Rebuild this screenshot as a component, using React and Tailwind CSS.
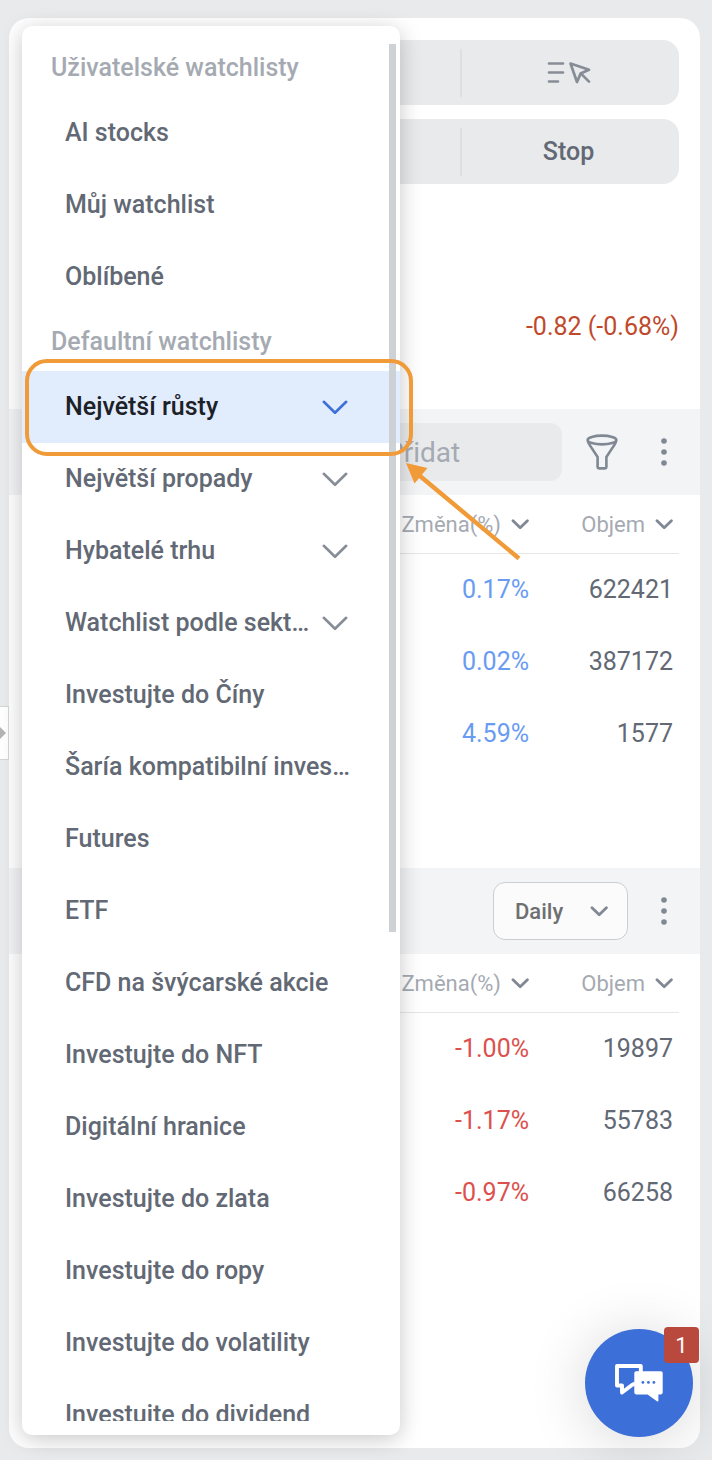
import clsx from 'clsx';

const userWatchlists = ['AI stocks', 'Můj watchlist', 'Oblíbené'];

const defaultWatchlists = [
    { label: 'Největší růsty', expandable: true, active: true },
    { label: 'Největší propady', expandable: true },
    { label: 'Hybatelé trhu', expandable: true },
    { label: 'Watchlist podle sekt…', expandable: true },
    { label: 'Investujte do Číny' },
    { label: 'Šaría kompatibilní inves…' },
    { label: 'Futures' },
    { label: 'ETF' },
    { label: 'CFD na švýcarské akcie' },
    { label: 'Investujte do NFT' },
    { label: 'Digitální hranice' },
    { label: 'Investujte do zlata' },
    { label: 'Investujte do ropy' },
    { label: 'Investujte do volatility' },
    { label: 'Investujte do dividend' },
];

const gainers = [
    { change: '0.17%', volume: '622421' },
    { change: '0.02%', volume: '387172' },
    { change: '4.59%', volume: '1577' },
];

const losers = [
    { change: '-1.00%', volume: '19897' },
    { change: '-1.17%', volume: '55783' },
    { change: '-0.97%', volume: '66258' },
];

function ChevronWide({ className }) {
    return (
        <svg viewBox="0 0 26 14" className={clsx('h-[14px] w-[26px] shrink-0', className)} fill="none" stroke="currentColor" strokeWidth="2.6" aria-hidden="true">
            <path d="M1.800 1.800 13 12.800l11.200-11" strokeLinecap="round" strokeLinejoin="round" />
        </svg>
    );
}

function ChevronSmall({ className }) {
    return (
        <svg viewBox="0 0 18 11" className={clsx('h-[11px] w-[18px] shrink-0 text-[#808893]', className)} fill="none" stroke="currentColor" strokeWidth="2.8" aria-hidden="true">
            <path d="M2 1.800 9.200 8.800l7.200-7" strokeLinecap="round" strokeLinejoin="round" />
        </svg>
    );
}

function OrderPickIcon() {
    return (
        <svg viewBox="0 0 44 24" className="h-6 w-11 text-[#868d97]" fill="none" stroke="currentColor" strokeWidth="2.7" strokeLinecap="round" strokeLinejoin="round" aria-hidden="true">
            <path d="M2 2.500h14M2 11.500h14M2 20.500h9" />
            <path d="M23.500 2.500 42 8.800l-8.400 3.800L30 21Z" />
            <path d="m34 12.600 8 8" />
        </svg>
    );
}

function FunnelIcon() {
    return (
        <svg viewBox="0 0 32 36" className="h-9 w-8" fill="none" stroke="currentColor" strokeWidth="2.6" strokeLinejoin="round" aria-hidden="true">
            <ellipse cx="16" cy="6" rx="14.4" ry="4.4" />
            <path d="M1.8 7.2c.6 2 1.600 3.500 2.800 5.200l7 10.600v9.400c0 1.200.7 2 1.900 2h5c1.200 0 1.900-.8 1.900-2V23l7-10.600c1.200-1.700 2.200-3.200 2.800-5.200" />
        </svg>
    );
}

function MoreButton({ label }) {
    return (
        <button type="button" aria-label={label} className="flex w-7 justify-center text-[#808893]">
            <svg viewBox="0 0 6 28" className="h-7 w-[6px]" fill="currentColor" aria-hidden="true">
                <circle cx="3" cy="3" r="2.800" />
                <circle cx="3" cy="14" r="2.800" />
                <circle cx="3" cy="25" r="2.800" />
            </svg>
        </button>
    );
}

function Segments({ children }) {
    return (
        <div className="flex h-[65px] items-center justify-end rounded-2xl bg-[#e9eaec]">
            <div className="flex h-12 w-1/3 items-center justify-center border-l-2 border-[#dddfe2] pr-1">{children}</div>
        </div>
    );
}

function QuoteTable({ rows, changeClass }) {
    return (
        <div className="pr-[21px] pl-[13px]">
            <table className="w-full border-separate border-spacing-0 text-right">
                <thead>
                    <tr className="h-[59px] text-[22px] text-[#a5aab2]">
                        <th scope="col" className="border-b border-[#e5e7e9] p-0 font-normal">
                            <button type="button" className="inline-flex items-center gap-[10px]">
                                Změna(%) <ChevronSmall />
                            </button>
                        </th>
                        <th scope="col" className="w-[150px] border-b border-[#e5e7e9] py-0 pr-[6px] pl-0 font-normal">
                            <button type="button" className="inline-flex items-center gap-[10px]">
                                Objem <ChevronSmall />
                            </button>
                        </th>
                    </tr>
                </thead>
                <tbody>
                    {rows.map((row) => (
                        <tr key={row.volume} className="h-[72px] text-[25px]">
                            <td className={clsx('p-0', changeClass)}>{row.change}</td>
                            <td className="py-0 pr-[6px] pl-0 text-[#626974]">{row.volume}</td>
                        </tr>
                    ))}
                </tbody>
            </table>
        </div>
    );
}

function WatchlistItem({ label, expandable, active }) {
    return (
        <li>
            <button
                type="button"
                className={clsx(
                    'flex h-[72px] w-full items-center justify-between pr-[52px] pl-[43px] text-left font-medium whitespace-nowrap',
                    active ? 'bg-[#e1edfd] text-[#1c2027]' : 'text-[#626974]',
                )}
            >
                {label}
                {expandable && <ChevronWide className={active ? 'text-[#3d6fd8]' : 'text-[#868d97]'} />}
            </button>
        </li>
    );
}

function WatchlistMenu() {
    return (
        <nav className="absolute top-2 bottom-[13px] left-[13px] flex w-[378px] flex-col rounded-[10px] bg-white pt-[13px] pb-[14px] text-[25px] shadow-[0_4px_22px_rgba(0,0,0,0.22)]">
            <div className="min-h-0 flex-1 overflow-hidden">
                <h2 className="flex h-[58px] items-center pl-[29px] font-medium text-[#a5aab2]">Uživatelské watchlisty</h2>
                <ul>
                    {userWatchlists.map((label) => (
                        <WatchlistItem key={label} label={label} />
                    ))}
                </ul>
                <h2 className="flex h-[58px] items-center pl-[29px] font-medium text-[#a5aab2]">Defaultní watchlisty</h2>
                <ul>
                    {defaultWatchlists.map((item) => (
                        <WatchlistItem key={item.label} {...item} />
                    ))}
                </ul>
            </div>
            {/* scroll thumb */}
            <div className="absolute top-[18px] right-1 h-[63%] w-[7px] bg-[#c9cdd0]/90" />
        </nav>
    );
}

function ChatButton() {
    return (
        <button type="button" aria-label="Chat" className="absolute right-[19px] bottom-[23px] flex size-[108px] items-center justify-center rounded-full bg-[#3d6fd8] shadow-[0_4px_60px_rgba(0,0,0,0.16)]">
            <svg viewBox="0 0 48 38" className="h-[38px] w-12" aria-hidden="true">
                <path d="M20 19.500 17 21 7 28.500V21.500H2V2h23.800V9" fill="none" stroke="#fff" strokeWidth="3.900" strokeLinejoin="round" />
                <path d="M21.100 7.200h24.800a1.800 1.800 0 0 1 1.800 1.800v19.600a1.800 1.800 0 0 1-1.800 1.800H43.400v6.300c0 .8-.8 1-1.400.6L32.500 30.400H21.100a1.800 1.800 0 0 1-1.800-1.800V9a1.800 1.800 0 0 1 1.800-1.800Z" fill="#fff" />
                <g fill="#3d6fd8">
                    <circle cx="27.900" cy="18.400" r="1.400" />
                    <circle cx="33.400" cy="18.400" r="1.400" />
                    <circle cx="38.900" cy="18.400" r="1.400" />
                </g>
            </svg>
            <span className="absolute -top-0.5 -right-1.5 flex h-9 w-[35px] items-center justify-center rounded bg-[#b9493d] text-[22px] text-white">1</span>
        </button>
    );
}

// Orange frame and arrow pointing at the active watchlist
function Callout() {
    return (
        <>
            <div className="pointer-events-none absolute top-[359px] left-[25px] h-[97px] w-[388px] rounded-[22px] border-4 border-[#f19a38]" />
            <svg viewBox="0 0 116 98" className="pointer-events-none absolute top-[462px] left-[405px] h-[98px] w-[116px]" aria-hidden="true">
                <path d="M12 11.500 114 96.500" stroke="#f19a38" strokeWidth="4.400" />
                <path d="M1 1l21.500 5L9.500 21.500Z" fill="#f19a38" />
            </svg>
        </>
    );
}

export default function App() {
    return (
        <div className="relative flex min-h-screen flex-col bg-[#e8eaec] pt-[18px] pr-3 pb-3 pl-[9px] font-['Roboto',sans-serif]">
            <button type="button" aria-label="Panel" className="absolute top-[706px] left-0 flex h-[54px] w-[9px] items-center border border-l-0 border-[#d4d5d7] bg-white">
                <svg viewBox="0 0 6 12" className="h-3 w-[6px]" aria-hidden="true">
                    <path d="M0 0 6 6 0 12Z" fill="#b4b4b4" />
                </svg>
            </button>

            <main className="relative flex-1 rounded-[20px] bg-white">
                <div className="space-y-[14px] pt-[22px] pr-[21px] pl-[13px]">
                    <Segments>
                        <button type="button" aria-label="Order">
                            <OrderPickIcon />
                        </button>
                    </Segments>
                    <Segments>
                        <button type="button" className="text-[25px] font-medium text-[#626974]">Stop</button>
                    </Segments>
                </div>

                <div className="flex h-[225px] items-center justify-end pt-[60px] pr-[21px] text-[25px] text-[#c0492b]">-0.82 (-0.68%)</div>

                <div className="flex h-[86px] items-center justify-end bg-[#f3f4f6] pr-[22px] text-[#808893]">
                    <input type="text" aria-label="Přidat" placeholder="Přidat" className="h-[58px] w-[216px] rounded-xl bg-[#e9eaec] pr-3 pl-10 text-[28px] text-[#626974] placeholder:text-[#a5aab2]" />
                    <button type="button" aria-label="Filter" className="mr-8 ml-6">
                        <FunnelIcon />
                    </button>
                    <MoreButton label="Watchlist menu" />
                </div>
                <QuoteTable rows={gainers} changeClass="text-[#6a9bf2]" />

                <div className="mt-[98px] flex h-[86px] items-center justify-end bg-[#f3f4f6] pr-[22px]">
                    <div className="relative mr-[22px]">
                        <select aria-label="Interval" className="h-[58px] w-[135px] appearance-none rounded-xl border border-[#cbced3] bg-[#fbfbfc] pl-[21px] text-[22px] font-medium text-[#6e6f71]">
                            <option>Daily</option>
                        </select>
                        <ChevronSmall className="pointer-events-none absolute top-6 right-5" />
                    </div>
                    <MoreButton label="Movers menu" />
                </div>
                <QuoteTable rows={losers} changeClass="text-[#dc504d]" />

                <WatchlistMenu />
            </main>

            <ChatButton />
            <Callout />
        </div>
    );
}
